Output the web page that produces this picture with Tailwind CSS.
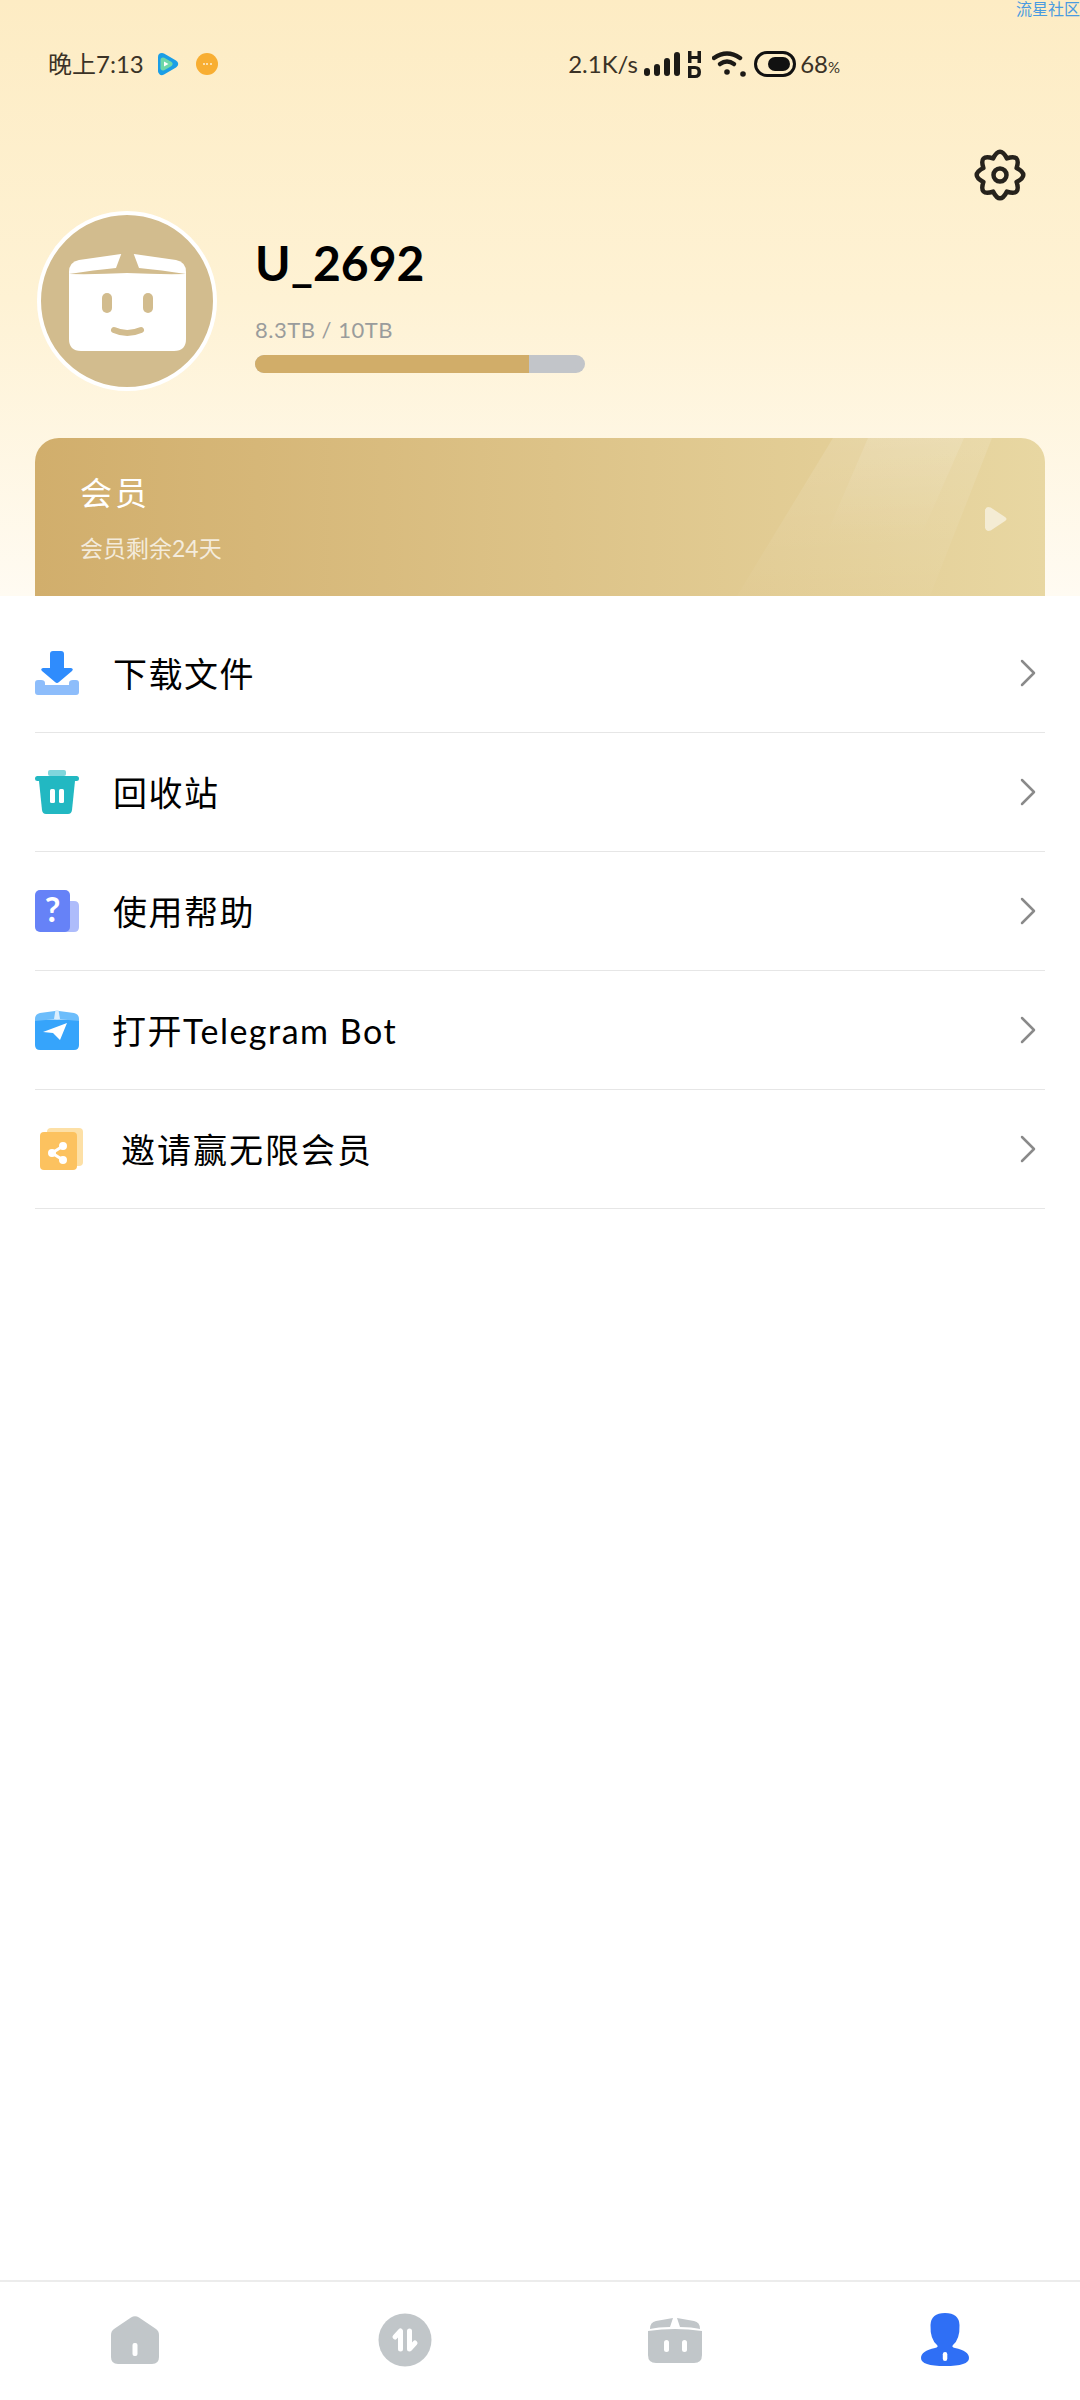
<!DOCTYPE html>
<html lang="zh-CN">
<head>
    <meta charset="UTF-8">
    <meta name="viewport" content="width=device-width, initial-scale=1.0">
    <title>我的</title>
    <script src="https://cdn.jsdelivr.net/npm/@tailwindcss/browser@4"></script>
</head>
<body class="bg-white font-['Lato','Noto_Sans_CJK_SC',sans-serif]">
    <div class="relative w-[1080px] h-[2400px] flex flex-col overflow-hidden">
        <span class="absolute top-0 right-0 text-[16px] leading-[18px] text-[#4a9be0]">流星社区</span>

        <!-- header -->
        <header class="h-[596px] shrink-0 flex flex-col bg-linear-to-b from-[#fdecc4] via-[#fef2d4] to-[#fffbf2]">
            <div class="h-[128px] pl-[48px] pr-[240px] flex items-center justify-between text-[#3a3226] shrink-0">
                <div class="flex items-center">
                    <span class="text-[24px] w-[108px] whitespace-nowrap">晚上7:13</span>
                    <svg class="w-[24px] h-[24px]" viewBox="0 0 24 24"><path d="M6 5 L18 12 L6 19Z" fill="#1b9ee6" stroke="#1b9ee6" stroke-width="8" stroke-linejoin="round"/><path d="M7 8 L14 12 L7 16Z" fill="#6ed8a8" stroke="#6ed8a8" stroke-width="5" stroke-linejoin="round"/><path d="M8 9.500 L12.500 12 L8 14.500Z" fill="#fff"/></svg>
                    <div class="ml-[16px] w-[22px] h-[22px] rounded-full bg-[#f8ae32] flex items-center justify-center gap-[1.5px]">
                        <i class="w-[2px] h-[2px] rounded-full bg-white/80"></i><i class="w-[2px] h-[2px] rounded-full bg-white/80"></i><i class="w-[2px] h-[2px] rounded-full bg-white/80"></i>
                    </div>
                </div>
                <div class="flex items-center">
                    <span class="text-[24px] whitespace-nowrap w-[76px]">2.1K/s</span>
                    <svg class="w-[36px] h-[26px]" viewBox="0 0 36 26" fill="#1c1a16"><rect x="0" y="17" width="6" height="8" rx="3"/><rect x="10" y="13" width="6" height="12" rx="3"/><rect x="20" y="7" width="6" height="18" rx="3"/><rect x="30" y="1" width="6" height="24" rx="3"/></svg>
                    <svg class="ml-[8px] w-[13px] h-[27px]" viewBox="0 0 13 27" fill="#1c1a16"><path d="M0 0h3.500v5h6V0H13v12H9.500V8h-6v4H0Z"/><path fill-rule="evenodd" d="M0 15h7q6 0 6 6t-6 6H0Zm3.500 3v6H7q2.500 0 2.500-3T7 18Z"/></svg>
                    <svg class="ml-[11px] w-[34px] h-[26px]" viewBox="0 0 34 26" fill="none" stroke="#1c1a16" stroke-width="4.500" stroke-linecap="round"><path d="M2 7 Q15 -2 28 7"/><path d="M8 13 Q15 8 22 13"/><circle cx="15" cy="21" r="2.800" fill="#1c1a16" stroke="none"/><circle cx="31" cy="23" r="2.800" fill="#1c1a16" stroke="none"/></svg>
                    <svg class="ml-[8px] w-[42px] h-[26px]" viewBox="0 0 42 26"><rect x="1.500" y="1.500" width="39" height="23" rx="11.500" fill="none" stroke="#111" stroke-width="3"/><rect x="14" y="6" width="22" height="14" rx="7" fill="#111"/></svg>
                    <span class="ml-[4px] text-[24px] whitespace-nowrap">68<span class="text-[15px]">%</span></span>
                </div>
            </div>

            <div class="flex justify-end pr-[54px] pt-[20px] h-[66px]">
                <svg class="w-[52px] h-[54px] shrink-0" viewBox="0 0 52 54" fill="none" stroke="#26221c" stroke-width="4.500" stroke-linejoin="round">
                    <path d="M42.600 20.100 Q56 27 42.600 33.900 Q47.200 48.200 32.900 43.600 Q26 57 19.100 43.600 Q4.800 48.200 9.400 33.900 Q-4 27 9.400 20.100 Q4.800 5.800 19.100 10.400 Q26 -3 32.900 10.400 Q47.200 5.800 42.600 20.100Z"/>
                    <circle cx="26" cy="27" r="6.500"/>
                </svg>
            </div>

            <div class="mt-[17px] pl-[37px] flex items-start">
                <div class="w-[180px] h-[180px] rounded-full border-[4px] border-white bg-[#d2bc8e] flex items-center justify-center shrink-0">
                    <svg class="w-[117px] h-[99px]" viewBox="0 0 117 99">
                        <path d="M10 8 L52 2 H65 L107 8 Q117 10 117 20 V87 Q117 99 105 99 H12 Q0 99 0 87 V20 Q0 10 10 8Z" fill="#fff"/>
                        <path d="M53 0 L47 16 Q25 18 0 22 Q30 22.500 58 21 Q88 22.500 117 22 Q92 18 70 16 L64 0Z" fill="#d2bc8e"/>
                        <rect x="33" y="41" width="10" height="20" rx="5" fill="#d2bc8e"/>
                        <rect x="74" y="41" width="10" height="20" rx="5" fill="#d2bc8e"/>
                        <path d="M45 78 Q58 84 72 78" fill="none" stroke="#d2bc8e" stroke-width="6" stroke-linecap="round"/>
                    </svg>
                </div>
                <div class="ml-[38px] mt-[24px] flex flex-col">
                    <h1 class="text-[48px] leading-[56px] font-bold text-black">U_2692</h1>
                    <p class="mt-[26px] text-[22px] leading-[26px] text-[#9a9c9c] tracking-[0.5px]">8.3TB / 10TB</p>
                    <div class="mt-[12px] w-[330px] h-[18px] rounded-full bg-[#c2c5c9] overflow-hidden">
                        <div class="h-full w-[274px] bg-[#d1ad69]"></div>
                    </div>
                </div>
            </div>

            <div class="relative overflow-hidden mt-auto mx-[35px] h-[158px] rounded-t-[24px] bg-linear-to-r from-[#d1ae6c] to-[#e8d7a2] flex items-center justify-between pl-[45px] pr-[38px]">
                <svg class="absolute right-0 top-0 w-[340px] h-[158px]" viewBox="0 0 340 158">
                    <defs>
                        <linearGradient id="shine" x1="0" y1="0" x2="0" y2="1"><stop offset="0" stop-color="#fff" stop-opacity="0.12"/><stop offset="1" stop-color="#fff" stop-opacity="0.02"/></linearGradient>
                        <linearGradient id="shine2" x1="0" y1="0" x2="0" y2="1"><stop offset="0" stop-color="#fff" stop-opacity="0.12"/><stop offset="1" stop-color="#fff" stop-opacity="0"/></linearGradient>
                    </defs>
                    <path d="M128 0 H287 L225 158 H32Z" fill="url(#shine)"/>
                    <path d="M163 0 H259 L215 100 H120Z" fill="url(#shine2)"/>
                </svg>
                <div class="relative text-white">
                    <h2 class="text-[32px] leading-[40px] tracking-[3px]">会员</h2>
                    <p class="mt-[21px] text-[23px] leading-[28px] text-white/75">会员剩余24天</p>
                </div>
                <svg class="relative w-[22px] h-[24px] mt-[4px]" viewBox="0 0 22 24"><path d="M3 0 Q1 0 0 3 V21 Q1 24 3 24 Q6 24 8 22 L20 14 Q23 12 20 10 L8 2 Q6 0 3 0Z" fill="#fff" fill-opacity="0.55"/></svg>
            </div>
        </header>

        <!-- menu -->
        <main class="flex-1 px-[35px] pt-[18px]">
            <ul class="flex flex-col">
                <li class="h-[119px] border-b border-[#e6e6e6] flex items-center">
                    <svg class="w-[44px] h-[44px] shrink-0" viewBox="0 0 44 44"><path d="M0 32 Q0 29 3 29 H6 Q10 29 10 32 V34 H34 V32 Q34 29 38 29 H41 Q44 29 44 32 V41 Q44 44 41 44 H3 Q0 44 0 41Z" fill="#8dbdfb"/><path d="M15 3 Q15 0 18 0 H26 Q29 0 29 3 V17 H36 Q39 18 37 20 L24 31 Q22 33 20 31 L7 20 Q5 18 8 17 H15Z" fill="#2f8cfd"/></svg>
                    <span class="ml-[34px] text-[34px] tracking-[1.500px] text-black">下载文件</span>
                    <svg class="ml-auto mr-[9px] w-[16px] h-[28px]" viewBox="0 0 16 28" fill="none" stroke="#8a8a8a" stroke-width="2.500" stroke-linecap="round" stroke-linejoin="round"><path d="M2 2 L14 14 L2 26"/></svg>
                </li>
                <li class="h-[119px] border-b border-[#e6e6e6] flex items-center">
                    <svg class="w-[44px] h-[44px] shrink-0" viewBox="0 0 44 44"><rect x="13" y="0" width="18" height="6" rx="2" fill="#7fd6dc"/><rect x="0" y="6" width="44" height="5" rx="2.500" fill="#22b8c2"/><path d="M4 11 H40 L37 40 Q36.500 44 33 44 H11 Q7.500 44 7 40Z" fill="#22b8c2"/><rect x="15" y="19" width="5" height="14" rx="1.500" fill="#fff"/><rect x="24" y="19" width="5" height="14" rx="1.500" fill="#fff"/></svg>
                    <span class="ml-[34px] text-[34px] tracking-[1.500px] text-black">回收站</span>
                    <svg class="ml-auto mr-[9px] w-[16px] h-[28px]" viewBox="0 0 16 28" fill="none" stroke="#8a8a8a" stroke-width="2.500" stroke-linecap="round" stroke-linejoin="round"><path d="M2 2 L14 14 L2 26"/></svg>
                </li>
                <li class="h-[119px] border-b border-[#e6e6e6] flex items-center">
                    <svg class="w-[44px] h-[42px] shrink-0" viewBox="0 0 44 42"><path d="M30 11 H39 Q44 11 44 16 V37 Q44 42 39 42 H30Z" fill="#aebcfb"/><rect x="0" y="0" width="35" height="42" rx="5" fill="#6682f7"/><text x="17.500" y="32" text-anchor="middle" font-size="34" font-weight="700" fill="#fff" font-family="Lato">?</text></svg>
                    <span class="ml-[34px] text-[34px] tracking-[1.500px] text-black">使用帮助</span>
                    <svg class="ml-auto mr-[9px] w-[16px] h-[28px]" viewBox="0 0 16 28" fill="none" stroke="#8a8a8a" stroke-width="2.500" stroke-linecap="round" stroke-linejoin="round"><path d="M2 2 L14 14 L2 26"/></svg>
                </li>
                <li class="h-[119px] border-b border-[#e6e6e6] flex items-center">
                    <svg class="w-[44px] h-[40px] shrink-0" viewBox="0 0 44 40"><path d="M0 10 V35 Q0 40 5 40 H39 Q44 40 44 35 V10 Z" fill="#36a4fb"/><path d="M0 11 V9 Q0 4 5 3 L20 1 L24 1 L39 3 Q44 4 44 9 V11 Q22 8 0 11Z" fill="#6cbdfb"/><path d="M20.500 0 H23.500 L25 9 H19Z" fill="#d9eefe"/><path d="M8 22 L32 13 L25 30 L18 23Z" fill="#fff"/></svg>
                    <span class="ml-[33px] text-[34px] tracking-[1.500px] text-black whitespace-nowrap">打开Telegram Bot</span>
                    <svg class="ml-auto mr-[9px] w-[16px] h-[28px]" viewBox="0 0 16 28" fill="none" stroke="#8a8a8a" stroke-width="2.500" stroke-linecap="round" stroke-linejoin="round"><path d="M2 2 L14 14 L2 26"/></svg>
                </li>
                <li class="h-[119px] border-b border-[#e6e6e6] flex items-center">
                    <svg class="ml-[5px] w-[43px] h-[42px] shrink-0" viewBox="0 0 43 42"><rect x="7" y="0" width="36" height="38" rx="4" fill="#fde0a6"/><rect x="0" y="4" width="37" height="38" rx="4" fill="#fcc25f"/><g stroke="#fff" stroke-width="3" fill="#fff"><path d="M23 18 L12 25 L23 32" fill="none"/><circle cx="23" cy="18" r="2.500"/><circle cx="12" cy="25" r="2.500"/><circle cx="23" cy="32" r="2.500"/></g></svg>
                    <span class="ml-[38px] text-[34px] tracking-[2px] text-black">邀请赢无限会员</span>
                    <svg class="ml-auto mr-[9px] w-[16px] h-[28px]" viewBox="0 0 16 28" fill="none" stroke="#8a8a8a" stroke-width="2.500" stroke-linecap="round" stroke-linejoin="round"><path d="M2 2 L14 14 L2 26"/></svg>
                </li>
            </ul>
        </main>

        <!-- bottom nav -->
        <nav class="h-[120px] shrink-0 border-t-[2px] border-[#ececec] grid grid-cols-4 items-center justify-items-center pb-[2px]">
            <svg class="w-[48px] h-[48px] mt-[-1px]" viewBox="0 0 48 48"><path d="M20 1.500 Q24 -1 28 1.500 L45 13 Q48 15 48 19 V41 Q48 48 41 48 H7 Q0 48 0 41 V19 Q0 15 3 13Z" fill="#c1c6c9"/><rect x="21.500" y="27" width="5" height="13" rx="2" fill="#fff"/></svg>
            <svg class="w-[54px] h-[54px]" viewBox="0 0 54 54"><circle cx="27" cy="27" r="26.500" fill="#c1c6c9"/><path d="M17 24 L22.500 18 V36 M31.500 18 V36 L37 30" fill="none" stroke="#fff" stroke-width="5" stroke-linecap="round" stroke-linejoin="round"/></svg>
            <svg class="w-[54px] h-[48px]" viewBox="0 0 54 48"><path d="M2 13 Q2 6 8 5 L25 2 L22 11 Q10 11 2 13Z" fill="#c1c6c9"/><path d="M29 2 L46 5 Q52 6 52 13 Q44 11 32 11Z" fill="#c1c6c9"/><path d="M0 15 Q27 11 54 15 V39 Q54 47 46 47 H8 Q0 47 0 39Z" fill="#c1c6c9"/><rect x="16" y="24" width="5" height="12" rx="2.500" fill="#fff"/><rect x="34" y="24" width="5" height="12" rx="2.500" fill="#fff"/></svg>
            <svg class="w-[48px] h-[54px]" viewBox="0 0 48 54"><path d="M24 0 Q10 0 9.500 12 Q9 26 16 32 Q18 34 14 35 Q0 38 0 45 Q0 53 24 53 Q48 53 48 45 Q48 38 34 35 Q30 34 32 32 Q39 26 38.500 12 Q38 0 24 0Z" fill="#2f6ff5"/><rect x="21.800" y="39" width="4.500" height="9" rx="2.200" fill="#fff"/></svg>
        </nav>
    </div>
</body>
</html>
